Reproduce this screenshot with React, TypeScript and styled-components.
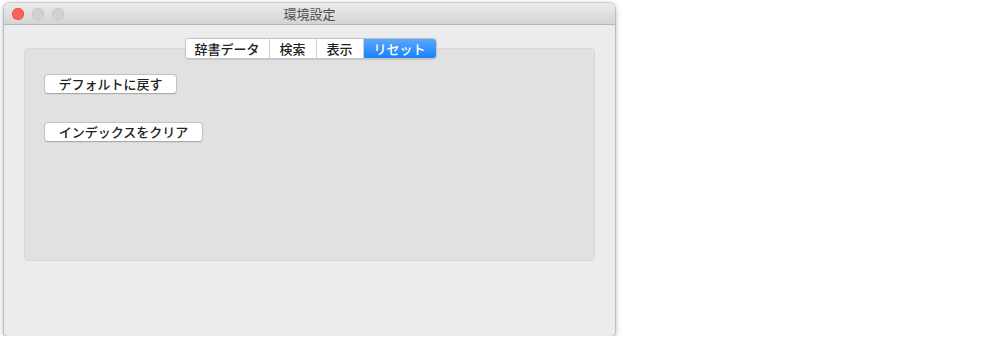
import React from "react";
import styled, { createGlobalStyle } from "styled-components";

const Global = createGlobalStyle`
  html, body { margin: 0; padding: 0; background: #ffffff; }
  body { font-family: "Noto Sans CJK JP", "Noto Sans", sans-serif; }
  * { box-sizing: border-box; }
`;

const Page = styled.div`
  padding: 3px 0 0 4px;
`;

const Window = styled.div`
  width: 611px;
  height: 333px;
  background: #ececec;
  border-radius: 5px 5px 4px 4px;
  box-shadow: 0 0 0 1px rgba(0,0,0,0.12), 0 2px 6px rgba(0,0,0,0.35);
  display: flex;
  flex-direction: column;
  overflow: hidden;
`;

const TitleBar = styled.div`
  height: 22px;
  flex: none;
  background: linear-gradient(#ebebeb, #d4d4d4);
  border-bottom: 1px solid #b8b8b8;
  display: grid;
  grid-template-columns: 70px 1fr 70px;
  align-items: center;
`;

const Lights = styled.div`
  display: flex;
  gap: 8px;
  padding-left: 8px;
`;

const Light = styled.span<{ $c: string; $b: string }>`
  width: 12px;
  height: 12px;
  border-radius: 50%;
  background: ${(p) => p.$c};
  box-shadow: inset 0 0 0 0.5px ${(p) => p.$b};
`;

const Title = styled.div`
  text-align: center;
  font-size: 13px;
  color: #4d4d4d;
  line-height: 21px;
`;

const Content = styled.div`
  flex: 1;
  padding: 13px 20px 0 20px;
  display: flex;
  flex-direction: column;
`;

const TabBar = styled.div`
  align-self: center;
  display: flex;
  height: 21px;
  border: 1px solid #c4c4c4;
  border-radius: 4px;
  background: #ffffff;
  margin-bottom: -11px;
  margin-left: 2px;
  position: relative;
  z-index: 1;
  box-shadow: 0 0.5px 1px rgba(0,0,0,0.12);
  overflow: hidden;
`;

const Tab = styled.div<{ $w: number; $active?: boolean }>`
  width: ${(p) => p.$w}px;
  display: flex;
  align-items: center;
  justify-content: center;
  font-size: 13px;
  font-weight: 500;
  line-height: 19px;
  white-space: nowrap;
  color: ${(p) => (p.$active ? "#ffffff" : "#222222")};
  background: ${(p) => (p.$active ? "linear-gradient(#5aa8fc, #1b7ffb)" : "#ffffff")};
  & + & {
    border-left: 1px solid #d0d0d0;
  }
`;

const GroupBox = styled.div`
  height: 213px;
  background: #e1e1e1;
  border: 1px solid #d8d8d8;
  border-radius: 4px;
  padding: 25px 19px 0;
  display: flex;
  flex-direction: column;
  align-items: flex-start;
  gap: 28px;
`;

const PushButton = styled.button<{ $w: number }>`
  width: ${(p) => p.$w}px;
  height: 20px;
  padding: 0;
  background: #ffffff;
  border: 1px solid #c2c2c2;
  border-bottom-color: #a9a9a9;
  border-radius: 4px;
  font-family: "Noto Sans CJK JP", sans-serif;
  font-size: 13px;
  font-weight: 500;
  white-space: nowrap;
  color: #222222;
  line-height: 18px;
  box-shadow: 0 0.5px 0.5px rgba(0,0,0,0.08);
`;

export default function App() {
  return (
    <Page>
      <Global />
      <Window>
        <TitleBar>
          <Lights>
            <Light $c="#fc605b" $b="#de4943" />
            <Light $c="#d1d1d1" $b="#c0c0c0" />
            <Light $c="#d1d1d1" $b="#c0c0c0" />
          </Lights>
          <Title>環境設定</Title>
          <span />
        </TitleBar>
        <Content>
          <TabBar>
            <Tab $w={83}>辞書データ</Tab>
            <Tab $w={47}>検索</Tab>
            <Tab $w={47}>表示</Tab>
            <Tab $w={73} $active>リセット</Tab>
          </TabBar>
          <GroupBox>
            <PushButton $w={133}>デフォルトに戻す</PushButton>
            <PushButton $w={159}>インデックスをクリア</PushButton>
          </GroupBox>
        </Content>
      </Window>
    </Page>
  );
}
